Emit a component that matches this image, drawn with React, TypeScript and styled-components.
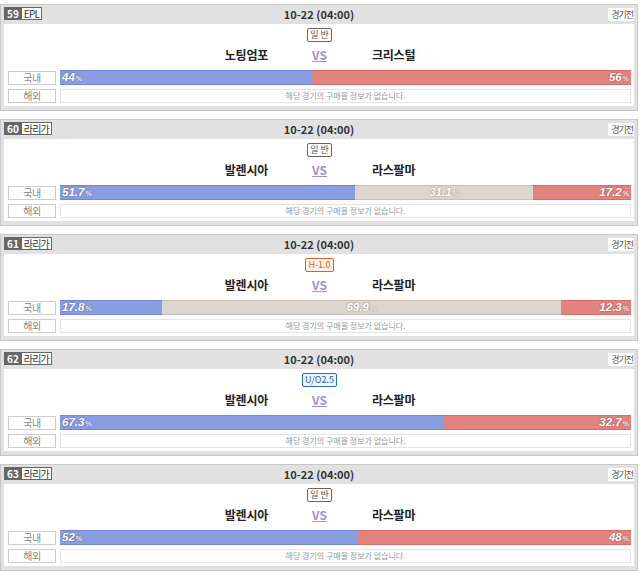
import styled, { createGlobalStyle } from 'styled-components';

const GlobalStyle = createGlobalStyle`
  body {
    margin: 0;
    background: #fff;
    font-family: "Noto Sans CJK KR", "Noto Sans", sans-serif;
  }
`;

type Kind = 'plain' | 'handicap' | 'uo';

const badgeColors: Record<Kind, { border: string; color: string; bg: string }> = {
  plain: { border: '#666', color: '#555', bg: '#fff' },
  handicap: { border: '#d9622b', color: '#d9622b', bg: '#fff3e6' },
  uo: { border: '#2d6db5', color: '#2d5f9e', bg: '#eef5fc' },
};

const Page = styled.div`
  padding-top: 4px;
  width: 638px;
`;

const Card = styled.div`
  box-sizing: border-box;
  height: 107px;
  margin-bottom: 8px;
  border: 1px solid #c8c8c8;
  background: #e1e1e1;
  padding: 0 3px 4px 3px;
  display: flex;
  flex-direction: column;
`;

const Header = styled.div`
  height: 19px;
  display: grid;
  grid-template-columns: 1fr auto 1fr;
  align-items: start;
  padding-top: 1.5px;
  box-sizing: border-box;
`;

const League = styled.div`
  display: flex;
  height: 13px;
  border: 1px solid #666;
  box-sizing: border-box;
  justify-self: start;
  font-size: 10px;
  line-height: 11px;
`;

const Num = styled.span`
  background: #666;
  color: #fff;
  font-weight: bold;
  padding: 0 3px 0 2px;
`;

const LeagueName = styled.span`
  background: #fff;
  color: #333;
  padding: 0 2px;
  letter-spacing: -0.8px;
`;

const DateText = styled.div`
  font-size: 11px;
  font-weight: bold;
  color: #333;
  line-height: 15px;
`;

const Status = styled.div`
  justify-self: end;
  background: #fff;
  color: #555;
  font-size: 9px;
  line-height: 13px;
  height: 13px;
  margin-top: 1px;
  padding: 0 1px 0 3px;
  letter-spacing: -1px;
`;

const Body = styled.div`
  background: #fff;
  padding: 4px 3px 3px 4px;
  display: flex;
  flex-direction: column;
`;

const Market = styled.div<{ $kind: Kind }>`
  align-self: center;
  box-sizing: border-box;
  height: 14px;
  padding: 0 2px;
  border: 1px solid ${(p) => badgeColors[p.$kind].border};
  border-radius: 2px;
  background: ${(p) => badgeColors[p.$kind].bg};
  color: ${(p) => badgeColors[p.$kind].color};
  font-size: 9px;
  line-height: 12px;
  white-space: pre;
`;

const Teams = styled.div`
  height: 24px;
  display: grid;
  grid-template-columns: 1fr auto 1fr;
  align-items: center;
  font-size: 12px;
  font-weight: bold;
  color: #222;
  letter-spacing: -0.2px;
`;

const Home = styled.div`
  text-align: right;
  padding-right: 44px;
`;

const Away = styled.div`
  padding-left: 45px;
`;

const Vs = styled.span`
  color: #a58fcc;
  text-decoration: underline;
  letter-spacing: 0;
  font-size: 12px;
`;

const Row = styled.div<{ $h: number }>`
  display: grid;
  grid-template-columns: 48px 1fr;
  column-gap: 4px;
  height: ${(p) => p.$h}px;
  margin-top: 4px;
  align-items: center;
`;

const Label = styled.div`
  box-sizing: border-box;
  height: 14px;
  border: 1px solid #ccc;
  color: #888;
  font-size: 10px;
  line-height: 12px;
  text-align: center;
  letter-spacing: -0.5px;
`;

const Bar = styled.div`
  display: flex;
  height: 15px;
`;

const segColors = {
  home: { bg: '#8a9de0', line: '#6f86d2' },
  draw: { bg: '#ddd6ce', line: '#c7bdb2' },
  away: { bg: '#e2837f', line: '#d26c68' },
};

type Side = keyof typeof segColors;

const Segment = styled.div<{ $side: Side }>`
  box-sizing: border-box;
  height: 15px;
  background: ${(p) => segColors[p.$side].bg};
  border-top: 1px solid ${(p) => segColors[p.$side].line};
  border-bottom: 1px solid ${(p) => segColors[p.$side].line};
  display: flex;
  align-items: center;
  justify-content: ${(p) =>
    p.$side === 'home' ? 'flex-start' : p.$side === 'away' ? 'flex-end' : 'center'};
  padding: 0 2px;
  overflow: hidden;
`;

const Pct = styled.span`
  font-family: "Liberation Sans", Arial, sans-serif;
  font-style: italic;
  font-weight: bold;
  font-size: 11.5px;
  color: #fff;
  text-shadow: 0 0 2px rgba(0, 0, 0, 0.45);
  line-height: 13px;
`;

const Unit = styled.span`
  font-size: 7px;
  font-style: normal;
  color: #eee;
  margin-left: 1px;
`;

const Info = styled.div`
  box-sizing: border-box;
  height: 14px;
  border: 1px solid #e4e4e4;
  color: #999;
  font-size: 8px;
  line-height: 12px;
  text-align: center;
`;

type Match = {
  no: number;
  league: string;
  market: string;
  kind: Kind;
  home: string;
  away: string;
  rates: number[];
};

const matches: Match[] = [
  { no: 59, league: 'EPL', market: '일 반', kind: 'plain', home: '노팅엄포', away: '크리스털', rates: [44, 56] },
  { no: 60, league: '라리가', market: '일 반', kind: 'plain', home: '발렌시아', away: '라스팔마', rates: [51.7, 31.1, 17.2] },
  { no: 61, league: '라리가', market: 'H-1.0', kind: 'handicap', home: '발렌시아', away: '라스팔마', rates: [17.8, 69.9, 12.3] },
  { no: 62, league: '라리가', market: 'U/O2.5', kind: 'uo', home: '발렌시아', away: '라스팔마', rates: [67.3, 32.7] },
  { no: 63, league: '라리가', market: '일 반', kind: 'plain', home: '발렌시아', away: '라스팔마', rates: [52, 48] },
];

const sidesFor = (n: number): Side[] => (n === 3 ? ['home', 'draw', 'away'] : ['home', 'away']);

const MatchCard = ({ m }: { m: Match }) => {
  const sides = sidesFor(m.rates.length);
  return (
    <Card>
      <Header>
        <League>
          <Num>{m.no}</Num>
          <LeagueName>{m.league}</LeagueName>
        </League>
        <DateText>10-22 (04:00)</DateText>
        <Status>경기전</Status>
      </Header>
      <Body>
        <Market $kind={m.kind}>{m.market}</Market>
        <Teams>
          <Home>{m.home}</Home>
          <Vs>VS</Vs>
          <Away>{m.away}</Away>
        </Teams>
        <Row $h={15}>
          <Label>국내</Label>
          <Bar>
            {m.rates.map((r, i) => (
              <Segment key={i} $side={sides[i]} style={{ width: `${r}%` }}>
                <Pct>
                  {r}
                  <Unit>%</Unit>
                </Pct>
              </Segment>
            ))}
          </Bar>
        </Row>
        <Row $h={14}>
          <Label>해외</Label>
          <Info>해당 경기의 구매율 정보가 없습니다.</Info>
        </Row>
      </Body>
    </Card>
  );
};

const App = () => (
  <>
    <GlobalStyle />
    <Page>
      {matches.map((m) => (
        <MatchCard key={m.no} m={m} />
      ))}
    </Page>
  </>
);

export default App;
